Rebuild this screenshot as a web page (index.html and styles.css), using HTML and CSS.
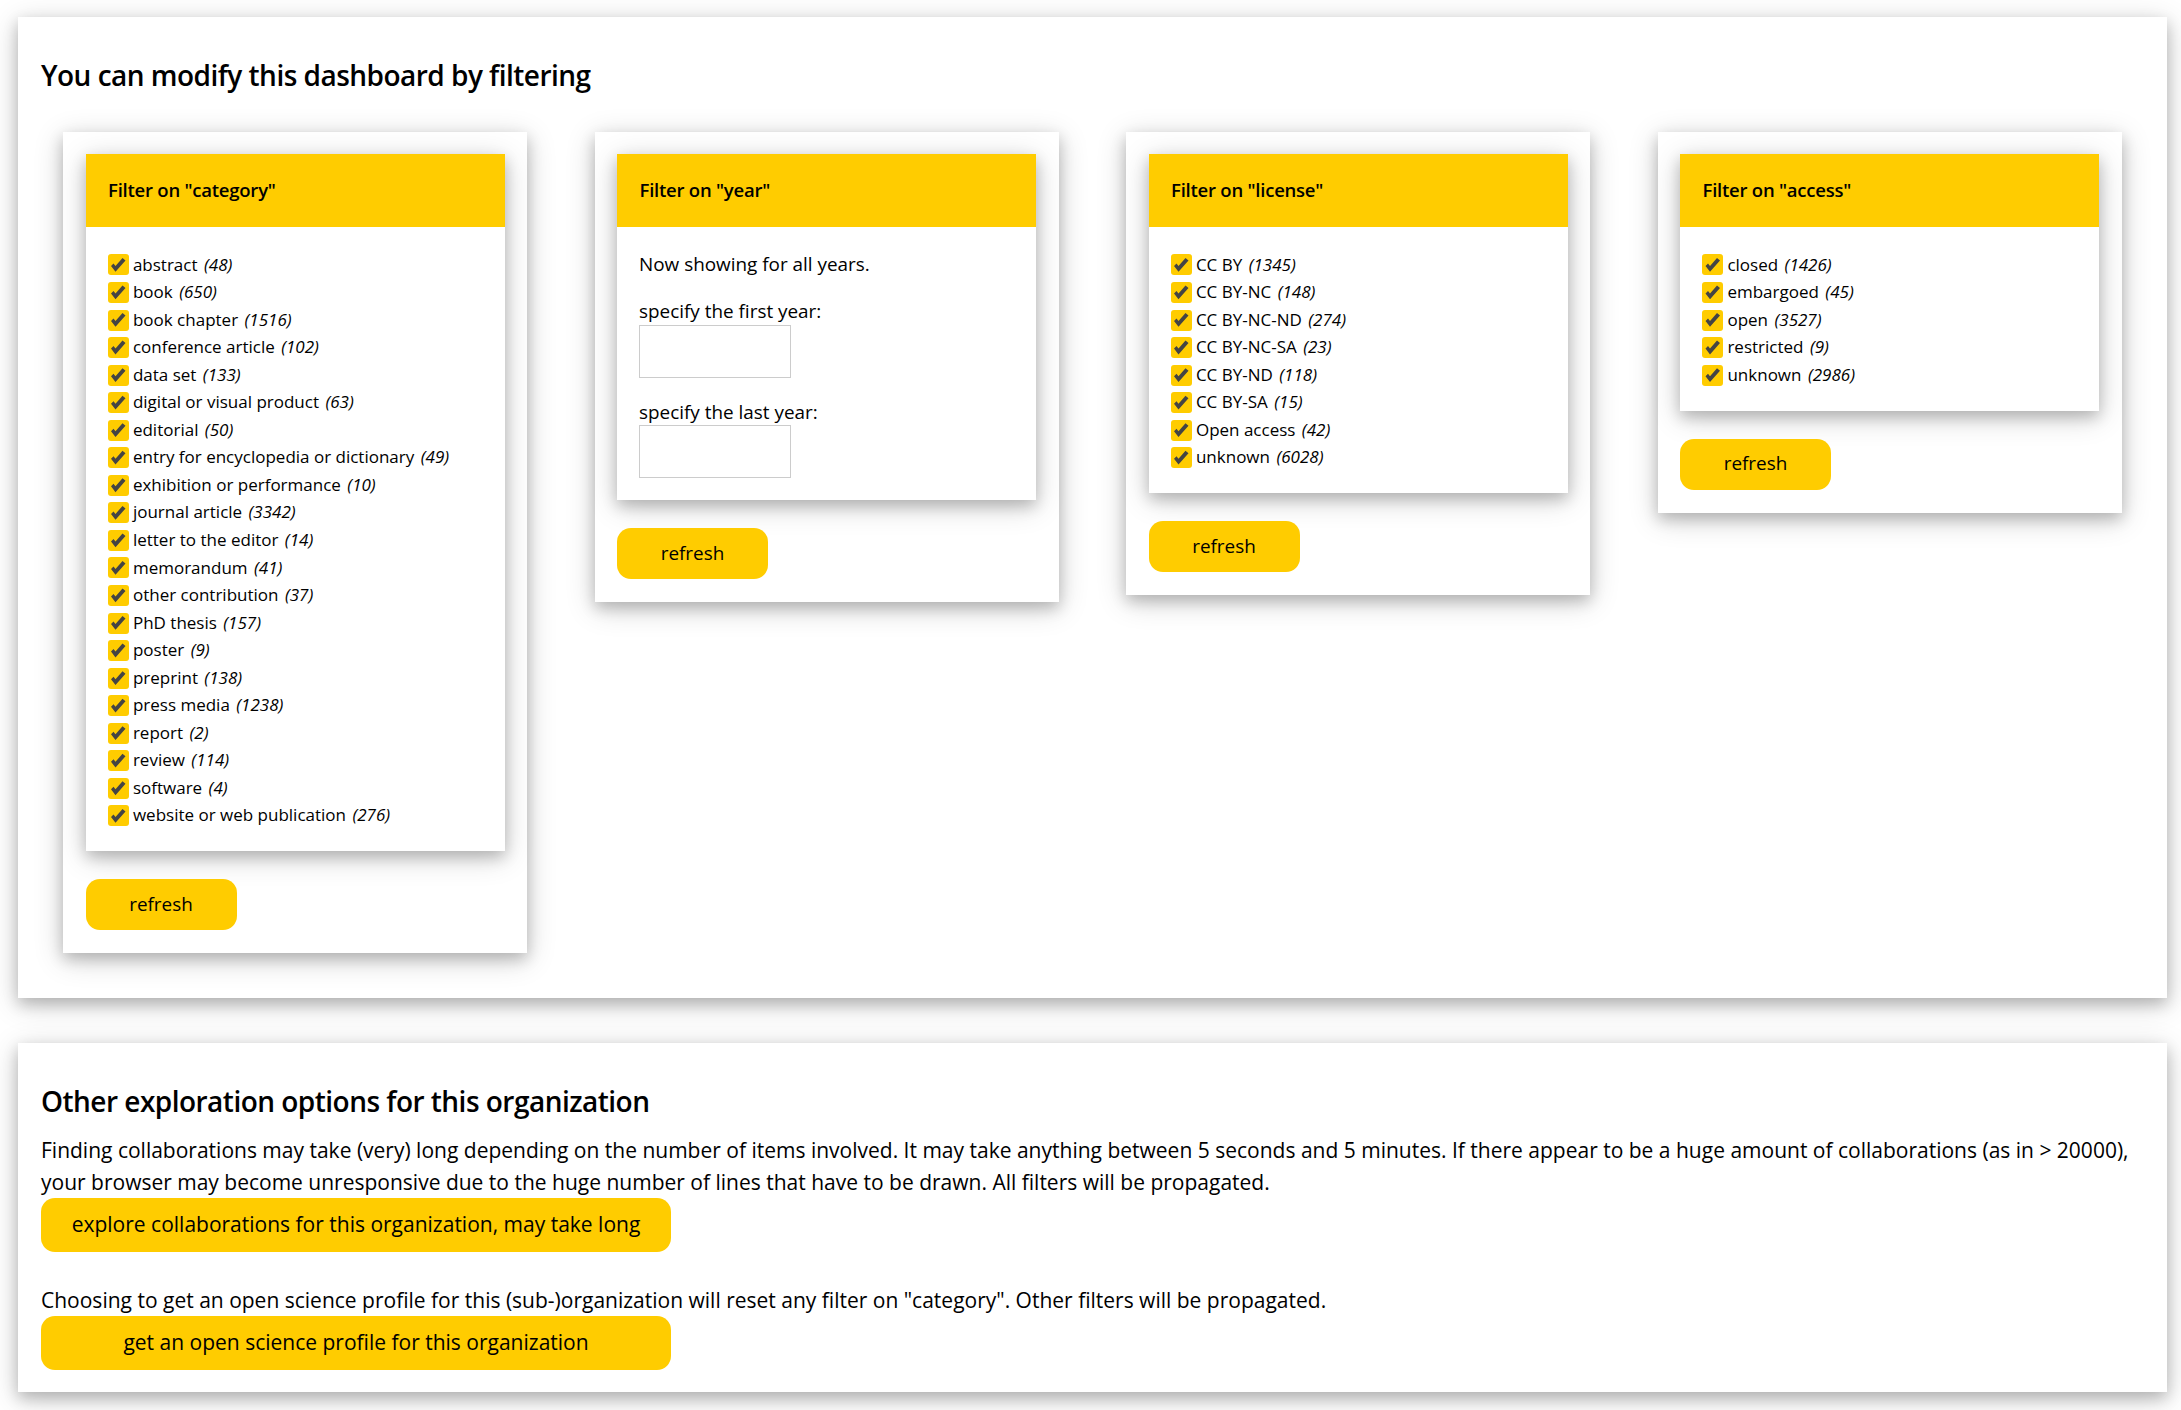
FILE: index.html
```html
<!DOCTYPE html>
<html lang="en">
<head>
  <meta charset="UTF-8" />
  <title>Dashboard filters</title>
  <link rel="stylesheet" href="styles.css">
</head>
<body>
  <section class="panel filters">
    <h2>You can modify this dashboard by filtering</h2>
    <div class="filter-grid">

      <div class="filter-card">
        <div class="filter-box">
          <h3>Filter on "category"</h3>
          <ul class="filter-list">
            <li><input type="checkbox" checked> abstract <i>(48)</i></li>
            <li><input type="checkbox" checked> book <i>(650)</i></li>
            <li><input type="checkbox" checked> book chapter <i>(1516)</i></li>
            <li><input type="checkbox" checked> conference article <i>(102)</i></li>
            <li><input type="checkbox" checked> data set <i>(133)</i></li>
            <li><input type="checkbox" checked> digital or visual product <i>(63)</i></li>
            <li><input type="checkbox" checked> editorial <i>(50)</i></li>
            <li><input type="checkbox" checked> entry for encyclopedia or dictionary <i>(49)</i></li>
            <li><input type="checkbox" checked> exhibition or performance <i>(10)</i></li>
            <li><input type="checkbox" checked> journal article <i>(3342)</i></li>
            <li><input type="checkbox" checked> letter to the editor <i>(14)</i></li>
            <li><input type="checkbox" checked> memorandum <i>(41)</i></li>
            <li><input type="checkbox" checked> other contribution <i>(37)</i></li>
            <li><input type="checkbox" checked> PhD thesis <i>(157)</i></li>
            <li><input type="checkbox" checked> poster <i>(9)</i></li>
            <li><input type="checkbox" checked> preprint <i>(138)</i></li>
            <li><input type="checkbox" checked> press media <i>(1238)</i></li>
            <li><input type="checkbox" checked> report <i>(2)</i></li>
            <li><input type="checkbox" checked> review <i>(114)</i></li>
            <li><input type="checkbox" checked> software <i>(4)</i></li>
            <li><input type="checkbox" checked> website or web publication <i>(276)</i></li>
          </ul>
        </div>
        <button class="btn refresh">refresh</button>
      </div>

      <div class="filter-card">
        <div class="filter-box">
          <h3>Filter on "year"</h3>
          <div class="year-body">
            <p>Now showing for all years.</p>
            <label>specify the first year:</label>
            <input class="year-input" type="text">
            <label class="second">specify the last year:</label>
            <input class="year-input" type="text">
          </div>
        </div>
        <button class="btn refresh">refresh</button>
      </div>

      <div class="filter-card">
        <div class="filter-box">
          <h3>Filter on "license"</h3>
          <ul class="filter-list">
            <li><input type="checkbox" checked> CC BY <i>(1345)</i></li>
            <li><input type="checkbox" checked> CC BY-NC <i>(148)</i></li>
            <li><input type="checkbox" checked> CC BY-NC-ND <i>(274)</i></li>
            <li><input type="checkbox" checked> CC BY-NC-SA <i>(23)</i></li>
            <li><input type="checkbox" checked> CC BY-ND <i>(118)</i></li>
            <li><input type="checkbox" checked> CC BY-SA <i>(15)</i></li>
            <li><input type="checkbox" checked> Open access <i>(42)</i></li>
            <li><input type="checkbox" checked> unknown <i>(6028)</i></li>
          </ul>
        </div>
        <button class="btn refresh">refresh</button>
      </div>

      <div class="filter-card">
        <div class="filter-box">
          <h3>Filter on "access"</h3>
          <ul class="filter-list">
            <li><input type="checkbox" checked> closed <i>(1426)</i></li>
            <li><input type="checkbox" checked> embargoed <i>(45)</i></li>
            <li><input type="checkbox" checked> open <i>(3527)</i></li>
            <li><input type="checkbox" checked> restricted <i>(9)</i></li>
            <li><input type="checkbox" checked> unknown <i>(2986)</i></li>
          </ul>
        </div>
        <button class="btn refresh">refresh</button>
      </div>

    </div>
  </section>

  <section class="panel options">
    <h2>Other exploration options for this organization</h2>
    <p>Finding collaborations may take (very) long depending on the number of items involved. It may take anything between 5 seconds and 5 minutes. If there appear to be a huge amount of collaborations (as in &gt; 20000), your browser may become unresponsive due to the huge number of lines that have to be drawn. All filters will be propagated.</p>
    <button class="btn wide">explore collaborations for this organization, may take long</button>
    <p class="second">Choosing to get an open science profile for this (sub-)organization will reset any filter on "category". Other filters will be propagated.</p>
    <button class="btn wide">get an open science profile for this organization</button>
  </section>
</body>
</html>
```

FILE: styles.css
```css
* {
  box-sizing: border-box;
}

body {
  margin: 0;
  padding: 17px 14px 20px 18px;
  background: white;
  color: #000;
  font-family: "Open Sans", sans-serif;
  font-size: 18.9px;
}

h2,
h3,
p,
ul {
  margin: 0;
  padding: 0;
}

.panel {
  background: white;
  box-shadow: 0 6px 14px 0 rgba(0, 0, 0, 0.2), 0 6px 28px 0 rgba(0, 0, 0, 0.19);
}

.panel h2 {
  font-size: 28px;
  font-weight: 600;
  letter-spacing: -0.52px;
  line-height: 40px;
}

.filters {
  height: 981px;
  padding: 38px 44px 0 23px;
}

.filter-grid {
  display: grid;
  grid-template-columns: repeat(4, 464px);
  column-gap: 67.5px;
  align-items: start;
  margin-top: 37px;
  margin-left: 22px;
}

.filter-card {
  padding: 22px 22.5px 23px;
  box-shadow: 0 6px 14px 0 rgba(0, 0, 0, 0.2), 0 6px 28px 0 rgba(0, 0, 0, 0.19);
}

.filter-box {
  box-shadow: 0 6px 14px 0 rgba(0, 0, 0, 0.2), 0 6px 28px 0 rgba(0, 0, 0, 0.19);
}

.filter-box h3 {
  height: 73px;
  padding: 0 22.5px;
  background: #ffcc00;
  font-size: 18.5px;
  font-weight: 600;
  letter-spacing: -0.23px;
  line-height: 72px;
}

.filter-list {
  list-style: none;
  padding: 23.5px 22px 22.5px;
  font-size: 17px;
}

.filter-list li {
  height: 27.55px;
  line-height: 27.55px;
  white-space: nowrap;
}

.filter-list i {
  margin-left: 2px;
}

.filter-list input {
  position: relative;
  appearance: none;
  width: 21px;
  height: 21px;
  margin: -2px 0 0;
  border-radius: 3px;
  background: #ffcc00;
  vertical-align: middle;
}

/* check mark, same shape on every box */
.filter-list input::after {
  content: "";
  position: absolute;
  inset: 0;
  background: #444;
  clip-path: polygon(3.5px 11.5px, 6px 9px, 8px 11.5px, 15px 3.5px, 18px 6px, 8px 17.3px);
}

.year-body {
  padding: 22px 22.5px 22px 22px;
}

.year-body p {
  line-height: 30px;
  margin-bottom: 17px;
}

.year-body label {
  display: block;
  line-height: 30px;
  margin-bottom: -1.5px;
}

.year-body .second {
  margin-top: 19px;
}

.year-input {
  display: block;
  width: 152px;
  height: 53px;
  border: 1px solid #ccc;
  background: white;
}

.btn {
  display: block;
  padding: 0 0 2px;
  border: none;
  border-radius: 14px;
  background: #ffcc00;
  color: #000;
  font-family: inherit;
  font-size: 18.9px;
}

.refresh {
  width: 151px;
  height: 51px;
  margin-top: 28px;
}

.options {
  height: 349px;
  margin-top: 45px;
  padding: 38px 30px 0 23px;
}

.options p {
  font-size: 21px;
  line-height: 32px;
  margin-top: 13px;
}

.options .second {
  margin-top: 31.5px;
}

.wide {
  width: 630px;
  height: 54px;
  font-size: 21px;
}
```
